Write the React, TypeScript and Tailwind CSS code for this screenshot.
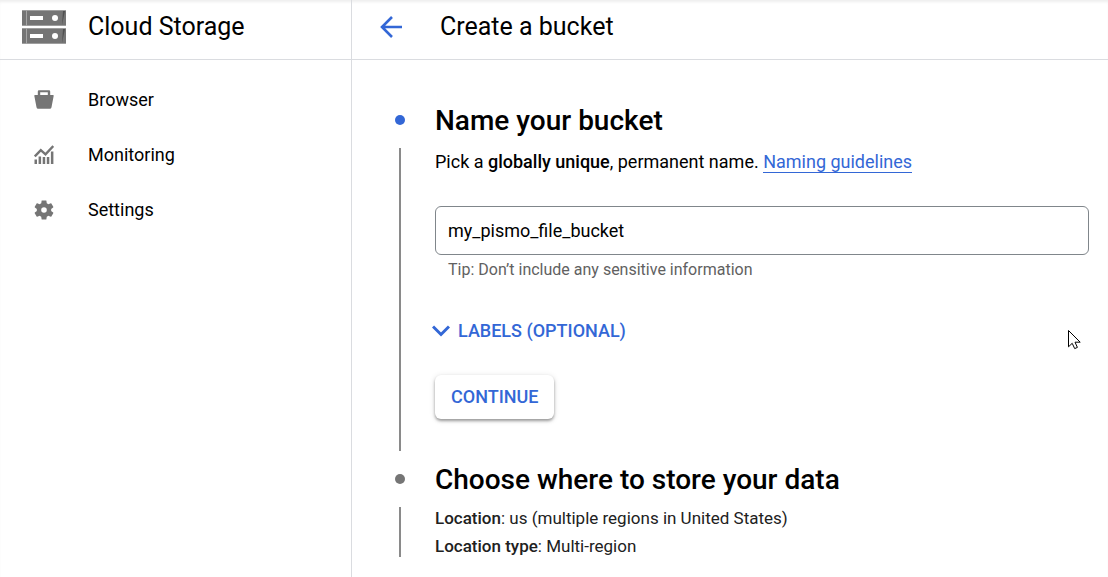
import type { ReactNode } from 'react';

interface NavItem {
  label: string;
  icon: ReactNode;
}

const navItems: NavItem[] = [
  {
    label: 'Browser',
    icon: (
      <svg viewBox="0 0 20 20" className="w-5 h-5" fill="#757575" aria-hidden="true">
        <path
          fillRule="evenodd"
          d="M5 .3h10q1.200 0 1.200 1.200v3.500H19q.8 0 .7.8l-2.200 11.500q-.3 1.500-1.700 1.500H4.200q-1.400 0-1.700-1.500L.3 5.800Q.2 5 1 5h2.800V1.500Q3.800.3 5 .3zM6.200 2.200V5h7.600V2.200z"
        />
      </svg>
    ),
  },
  {
    label: 'Monitoring',
    icon: (
      <svg viewBox="0 0 20 20" className="w-5 h-5" fill="#757575" aria-hidden="true">
        <path d="M.5 14.500h2.500V19H.5zM4.600 11.500h2.500V19H4.600zM8.700 12h2.500v7H8.700zM12.800 12h2.500v7h-2.500zM16.900 6.500h2.500V19h-2.500z" />
        <path d="M.8 11.500 6.800 5.200l4.700 4.200L19.300 1" fill="none" stroke="#757575" strokeWidth="2.400" />
      </svg>
    ),
  },
  {
    label: 'Settings',
    icon: (
      <svg viewBox="2 2 20 20" className="w-5 h-5" fill="#757575" aria-hidden="true">
        <path d="M19.140 12.940c.04-.3.06-.61.06-.94 0-.32-.02-.64-.07-.94l2.030-1.580c.18-.14.23-.41.12-.61l-1.920-3.320c-.12-.22-.37-.29-.59-.22l-2.390.96c-.5-.38-1.030-.7-1.620-.94l-.36-2.540c-.04-.24-.24-.41-.48-.41h-3.840c-.24 0-.43.17-.47.41l-.36 2.540c-.59.24-1.130.57-1.620.94l-2.390-.96c-.22-.08-.47 0-.59.22L2.740 8.870c-.12.21-.08.47.12.61l2.030 1.580c-.05.3-.09.63-.09.94s.02.64.07.94l-2.030 1.580c-.18.14-.23.41-.12.61l1.920 3.320c.12.22.37.29.59.22l2.390-.96c.5.38 1.030.7 1.620.94l.36 2.540c.05.24.24.41.48.41h3.840c.24 0 .44-.17.47-.41l.36-2.540c.59-.24 1.130-.56 1.620-.94l2.390.96c.22.08.47 0 .59-.22l1.920-3.320c.12-.22.07-.47-.12-.61l-2.010-1.580zM12 14.800a2.800 2.800 0 1 1 0-5.600 2.800 2.800 0 0 1 0 5.600z" />
      </svg>
    ),
  },
];

const StorageLogo = () => (
  <svg viewBox="0 0 44 34" className="w-11 h-[34px]" aria-hidden="true">
    {[0, 18].map((y) => (
      <g key={y}>
        <rect y={y} width="44" height="16" fill="#757575" />
        <rect y={y} width="44" height="1" fill="#9e9e9e" />
        <rect y={y + 15} width="44" height="1" fill="#9e9e9e" />
        <rect x="4" y={y} width="1" height="16" fill="#a5a5a5" />
        <path d={`M41 ${y + 1}h2l-3 14z`} fill="#505050" />
        <rect x="8" y={y + 6} width="13" height="4" fill="#fff" />
        <circle cx="33" cy={y + 8} r="3" fill="#fff" />
      </g>
    ))}
  </svg>
);

const Sidebar = () => (
  <aside className="w-[352px] shrink-0 border-r border-[#dadce0]">
    <div className="h-15 flex items-center pb-1.5 pl-[22px] gap-[22px] border-b border-[#dadce0]">
      <StorageLogo />
      <span className="text-[25px] leading-8">Cloud Storage</span>
    </div>
    <nav className="pt-3">
      {navItems.map((item) => (
        <a key={item.label} href="#" className="h-[55px] flex items-center gap-[34px] pl-[34px] text-lg">
          {item.icon}
          {item.label}
        </a>
      ))}
    </nav>
  </aside>
);

interface StepProps {
  title: string;
  active?: boolean;
  children: ReactNode;
}

const Step = ({ title, active, children }: StepProps) => (
  <section className="grid grid-cols-[10px_minmax(0,1fr)] gap-x-[30px]">
    <span
      className={`w-2.5 h-2.5 rounded-full self-center justify-self-center ${active ? 'bg-[#3367d6]' : 'bg-[#757575]'}`}
    />
    <h2 className="h-14 pt-0.5 flex items-center text-[28px] font-medium">{title}</h2>
    <span className="w-0.5 bg-[#8a8a8a] justify-self-center" />
    {children}
  </section>
);

const App = () => (
  <div className="flex min-h-screen bg-white text-black font-['Roboto',sans-serif] shadow-[inset_0_3px_3px_-1px_#eeeeee]">
    <Sidebar />
    <main className="flex-1 min-w-0 relative">
      <header className="h-15 flex items-center pb-1.5 pl-7 gap-[38px] border-b border-[#dadce0]">
        <button type="button" aria-label="Back">
          <svg viewBox="0 0 22 22" className="w-[22px] h-[22px]" fill="none" stroke="#3367d6" strokeWidth="2.600" aria-hidden="true">
            <path d="M22 11H2M12 1 2 11l10 10" />
          </svg>
        </button>
        <h1 className="text-[25px] leading-8">Create a bucket</h1>
      </header>

      <div className="pt-8 pl-[43px] pr-[19px]">
        <Step title="Name your bucket" active>
          <div className="pb-8">
            <p className="text-lg">
              Pick a <strong className="font-medium">globally unique</strong>, permanent name.{' '}
              <a href="#" className="text-[#3367d6] border-b border-[#3367d6]">
                Naming guidelines
              </a>
            </p>
            <input
              type="text"
              aria-label="Bucket name"
              aria-describedby="name-tip"
              defaultValue="my_pismo_file_bucket"
              className="block w-full h-[49px] mt-[30px] px-3 text-lg rounded-md border border-[#80868b]"
            />
            <p id="name-tip" className="mt-[3px] pl-[13px] text-base text-[#616161]">
              Tip: Don’t include any sensitive information
            </p>
            <button type="button" className="-ml-[3px] mt-[35px] flex items-center gap-2 text-lg font-medium text-[#3367d6]">
              <svg viewBox="0 0 18 12" className="w-[18px] h-3" fill="none" stroke="#3367d6" strokeWidth="3" aria-hidden="true">
                <path d="m1 1.500 8 8 8-8" />
              </svg>
              LABELS (OPTIONAL)
            </button>
            <button
              type="button"
              className="mt-[30px] h-11 px-4 rounded-md bg-white text-lg font-medium text-[#3367d6] shadow-[0_2px_3px_rgba(0,0,0,0.35),0_1px_6px_rgba(0,0,0,0.12)]"
            >
              CONTINUE
            </button>
          </div>
        </Step>

        <Step title="Choose where to store your data">
          <dl className="text-[17px] leading-7 text-[#212121] -mt-[3px] -mb-[3px]">
            <div>
              <dt className="inline font-medium">Location</dt>
              <dd className="inline">: us (multiple regions in United States)</dd>
            </div>
            <div>
              <dt className="inline font-medium">Location type</dt>
              <dd className="inline">: Multi-region</dd>
            </div>
          </dl>
        </Step>
      </div>

      {/* mouse pointer floating over the form */}
      <svg viewBox="0 0 13 20" className="absolute right-[27px] top-[330px] w-[13px] h-5 pointer-events-none" aria-hidden="true">
        <path d="M.5.5v16.300l3.700-3.500 2.500 5.300 2.700-1.200-2.400-5.200h5.200z" fill="#fff" stroke="#000" />
      </svg>
    </main>
  </div>
);

export default App;
